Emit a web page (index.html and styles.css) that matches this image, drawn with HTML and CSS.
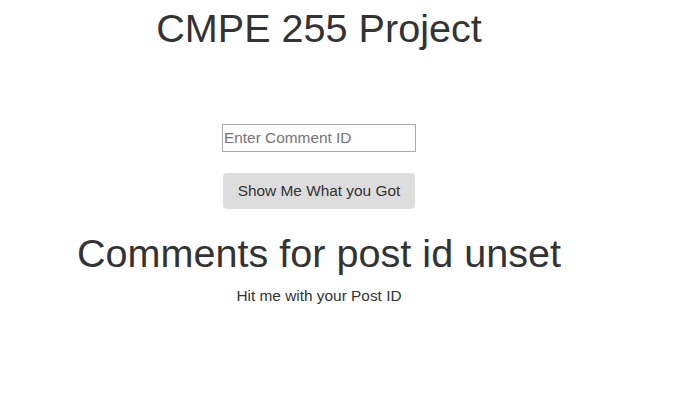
FILE: index.html
```html
<!DOCTYPE html>
<html>
<head>
<meta charset="utf-8">
<link rel="stylesheet" href="styles.css">
</head>
<body>
<div class="app">
  <h1 class="title">CMPE 255 Project</h1>
  <div class="form">
    <input class="field" type="text" placeholder="Enter Comment ID">
    <button class="btn">Show Me What you Got</button>
  </div>
  <h1 class="heading">Comments for post id unset</h1>
  <p class="hint">Hit me with your Post ID</p>
</div>
</body>
</html>
```
FILE: styles.css
```css
html, body {
  margin: 0;
  padding: 0;
  background: #fff;
}
body {
  font-family: "Liberation Sans", Arial, sans-serif;
  color: #333;
}
.app {
  width: 638px;
  text-align: center;
}
.title {
  margin: 0;
  padding-top: 8px;
  font-size: 39.6px;
  font-weight: 400;
  line-height: 40px;
}
.form {
  display: flex;
  flex-direction: column;
  align-items: center;
  gap: 21px;
  margin-top: 76px;
}
.field {
  box-sizing: border-box;
  width: 194px;
  height: 28px;
  border: 1px solid #a9a9a9;
  padding: 0 1px;
  font-family: "Liberation Sans", Arial, sans-serif;
  font-size: 15.4px;
  color: #333;
  margin: 0;
}
.field::placeholder {
  color: #757575;
}
.btn {
  box-sizing: border-box;
  width: 192px;
  height: 36px;
  border: none;
  border-radius: 4px;
  background: #ddd;
  color: #333;
  font-family: "Liberation Sans", Arial, sans-serif;
  font-size: 15.4px;
  margin: 0;
}
.heading {
  margin: 22px 0 0;
  font-size: 39.6px;
  font-weight: 400;
  line-height: 44px;
}
.hint {
  margin: 11px 0 0;
  font-size: 15.4px;
  line-height: 20px;
}
```
